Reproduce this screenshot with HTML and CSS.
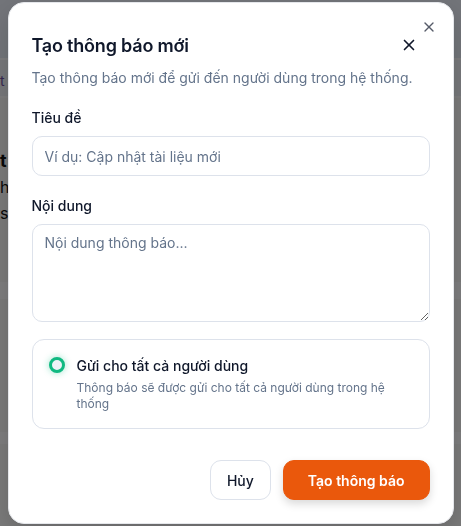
FILE: index.html
```html
<!DOCTYPE html>
<html lang="vi">
<head>
<meta charset="utf-8">
<title>Tạo thông báo mới</title>
<link rel="stylesheet" href="styles.css">
</head>
<body>
<div class="page">
  <div class="page-header"></div>
  <div class="page-sub"><span class="bg-t">t</span></div>
  <div class="page-main">
    <div class="bg-text bold">t</div>
    <div class="bg-text">h</div>
    <div class="bg-text">s</div>
    <div class="bg-band band1"></div>
    <div class="bg-band band2"></div>
  </div>
</div>

<div class="overlay">
  <div class="dialog" role="dialog">
    <button class="dialog-close" aria-label="Close">
      <svg viewBox="0 0 24 24" width="16" height="16" fill="none" stroke="currentColor" stroke-width="2" stroke-linecap="round" stroke-linejoin="round"><path d="M18 6 6 18"/><path d="m6 6 12 12"/></svg>
    </button>

    <div class="header">
      <h2 class="title">Tạo thông báo mới</h2>
      <button class="header-close" aria-label="Đóng">
        <svg viewBox="0 0 24 24" width="18" height="18" fill="none" stroke="currentColor" stroke-width="2.2" stroke-linecap="round" stroke-linejoin="round"><path d="M18 6 6 18"/><path d="m6 6 12 12"/></svg>
      </button>
    </div>
    <p class="desc">Tạo thông báo mới để gửi đến người dùng trong hệ thống.</p>

    <div class="field">
      <label class="label" for="title">Tiêu đề</label>
      <input id="title" class="input" type="text" placeholder="Ví dụ: Cập nhật tài liệu mới">
    </div>

    <div class="field">
      <label class="label" for="content">Nội dung</label>
      <textarea id="content" class="textarea" placeholder="Nội dung thông báo..."></textarea>
    </div>

    <div class="option-card">
      <span class="radio"></span>
      <div class="option-text">
        <div class="option-title">Gửi cho tất cả người dùng</div>
        <div class="option-desc">Thông báo sẽ được gửi cho tất cả người dùng trong hệ thống</div>
      </div>
    </div>

    <div class="footer">
      <button class="btn btn-outline">Hủy</button>
      <button class="btn btn-primary">Tạo thông báo</button>
    </div>
  </div>
</div>
</body>
</html>
```

FILE: styles.css
```css
* { box-sizing: border-box; }
html, body { margin: 0; padding: 0; }
body {
  width: 461px;
  height: 526px;
  overflow: hidden;
  font-family: Inter, "Noto Sans", sans-serif;
  background: #f4f4f5;
}

/* background page (seen through overlay) */
.page { height: 526px; }
.page-header { height: 60px; background: #e4e9f3; border-bottom: 2px solid #f8f9fb; }
.page-sub { height: 38px; background: #eceff4; border-bottom: 2px solid #f8f9fb; }
.bg-t { display: block; padding: 12px 0 0 0; color: #6b4fa0; font-size: 14px; }
.page-main { padding-top: 50px; }
.bg-text { font-size: 16px; line-height: 26px; color: #111; }
.bg-text.bold { font-weight: 700; font-size: 18px; }
.bg-band { height: 17px; background: #fafbfd; }
.band1 { margin-top: 56px; }
.band2 { margin-top: 133px; height: 12px; }

.overlay {
  position: fixed;
  inset: 0;
  background: rgba(0, 0, 0, 0.5);
  display: flex;
  align-items: center;
  justify-content: center;
}

.dialog {
  position: relative;
  width: 446px;
  background: #fff;
  border: 1px solid #e5e7eb;
  border-radius: 16px;
  padding: 23px;
  box-shadow: 0 10px 25px rgba(0,0,0,0.15);
  display: flex;
  flex-direction: column;
}

.dialog-close {
  position: absolute;
  top: 16px;
  right: 16px;
  width: 16px;
  height: 16px;
  padding: 0;
  border: 0;
  background: none;
  color: #0f172a;
  opacity: 0.7;
  display: flex;
}

.header {
  height: 40px;
  display: flex;
  align-items: center;
  justify-content: space-between;
}
.title {
  margin: 0;
  font-size: 18px;
  line-height: 28px;
  font-weight: 600;
  color: #0f172a;
  letter-spacing: -0.2px;
}
.header-close {
  width: 40px;
  height: 40px;
  margin-right: 1px;
  margin-top: -2px;
  border: 0;
  background: none;
  padding: 0;
  color: #0f172a;
  display: flex;
  align-items: center;
  justify-content: center;
}

.desc {
  margin: 2px 0 0;
  font-size: 14px;
  line-height: 20px;
  color: #64748b;
}

.field {
  margin-top: 20px;
  display: flex;
  flex-direction: column;
  gap: 8px;
}
.label {
  font-size: 14px;
  line-height: 20px;
  font-weight: 500;
  color: #0f172a;
}
.input, .textarea {
  font-family: inherit;
  font-size: 14px;
  color: #0f172a;
  border: 1px solid #dde2eb;
  border-radius: 10px;
  background: #fff;
  padding: 0 12px;
  width: 100%;
  outline: none;
}
.input { height: 40px; }
.textarea {
  height: 98px;
  padding: 8px 12px;
  line-height: 20px;
  display: block;
  resize: vertical;
}
.input::placeholder, .textarea::placeholder { color: #64748b; opacity: 1; }

.option-card {
  margin-top: 17px;
  border: 1px solid #dde2eb;
  border-radius: 12px;
  padding: 16px;
  display: flex;
  align-items: flex-start;
  gap: 12px;
}
.radio {
  flex: none;
  width: 16px;
  height: 16px;
  margin-top: 1px;
  border-radius: 50%;
  border: 3px solid #10b981;
  background: #eef2f7;
  box-shadow: 0 0 6px 1px rgba(16, 185, 129, 0.3);
}
.option-text { flex: 1; }
.option-title {
  font-size: 14px;
  line-height: 20px;
  font-weight: 500;
  color: #0f172a;
}
.option-desc {
  margin-top: 4px;
  font-size: 12px;
  line-height: 16px;
  color: #64748b;
}

.footer {
  margin-top: 31px;
  display: flex;
  justify-content: flex-end;
  gap: 12px;
}
.btn {
  height: 40px;
  font-family: inherit;
  font-size: 14px;
  border-radius: 11px;
  cursor: pointer;
}
.btn-outline {
  padding: 0 16px;
  background: #fff;
  border: 1px solid #dde2eb;
  color: #0f172a;
  font-weight: 500;
}
.btn-primary {
  padding: 0 24px;
  background: #ea580c;
  border: 1px solid #ea580c;
  color: #fff;
  font-weight: 600;
  box-shadow: 0 4px 8px rgba(0, 0, 0, 0.15);
}
```
